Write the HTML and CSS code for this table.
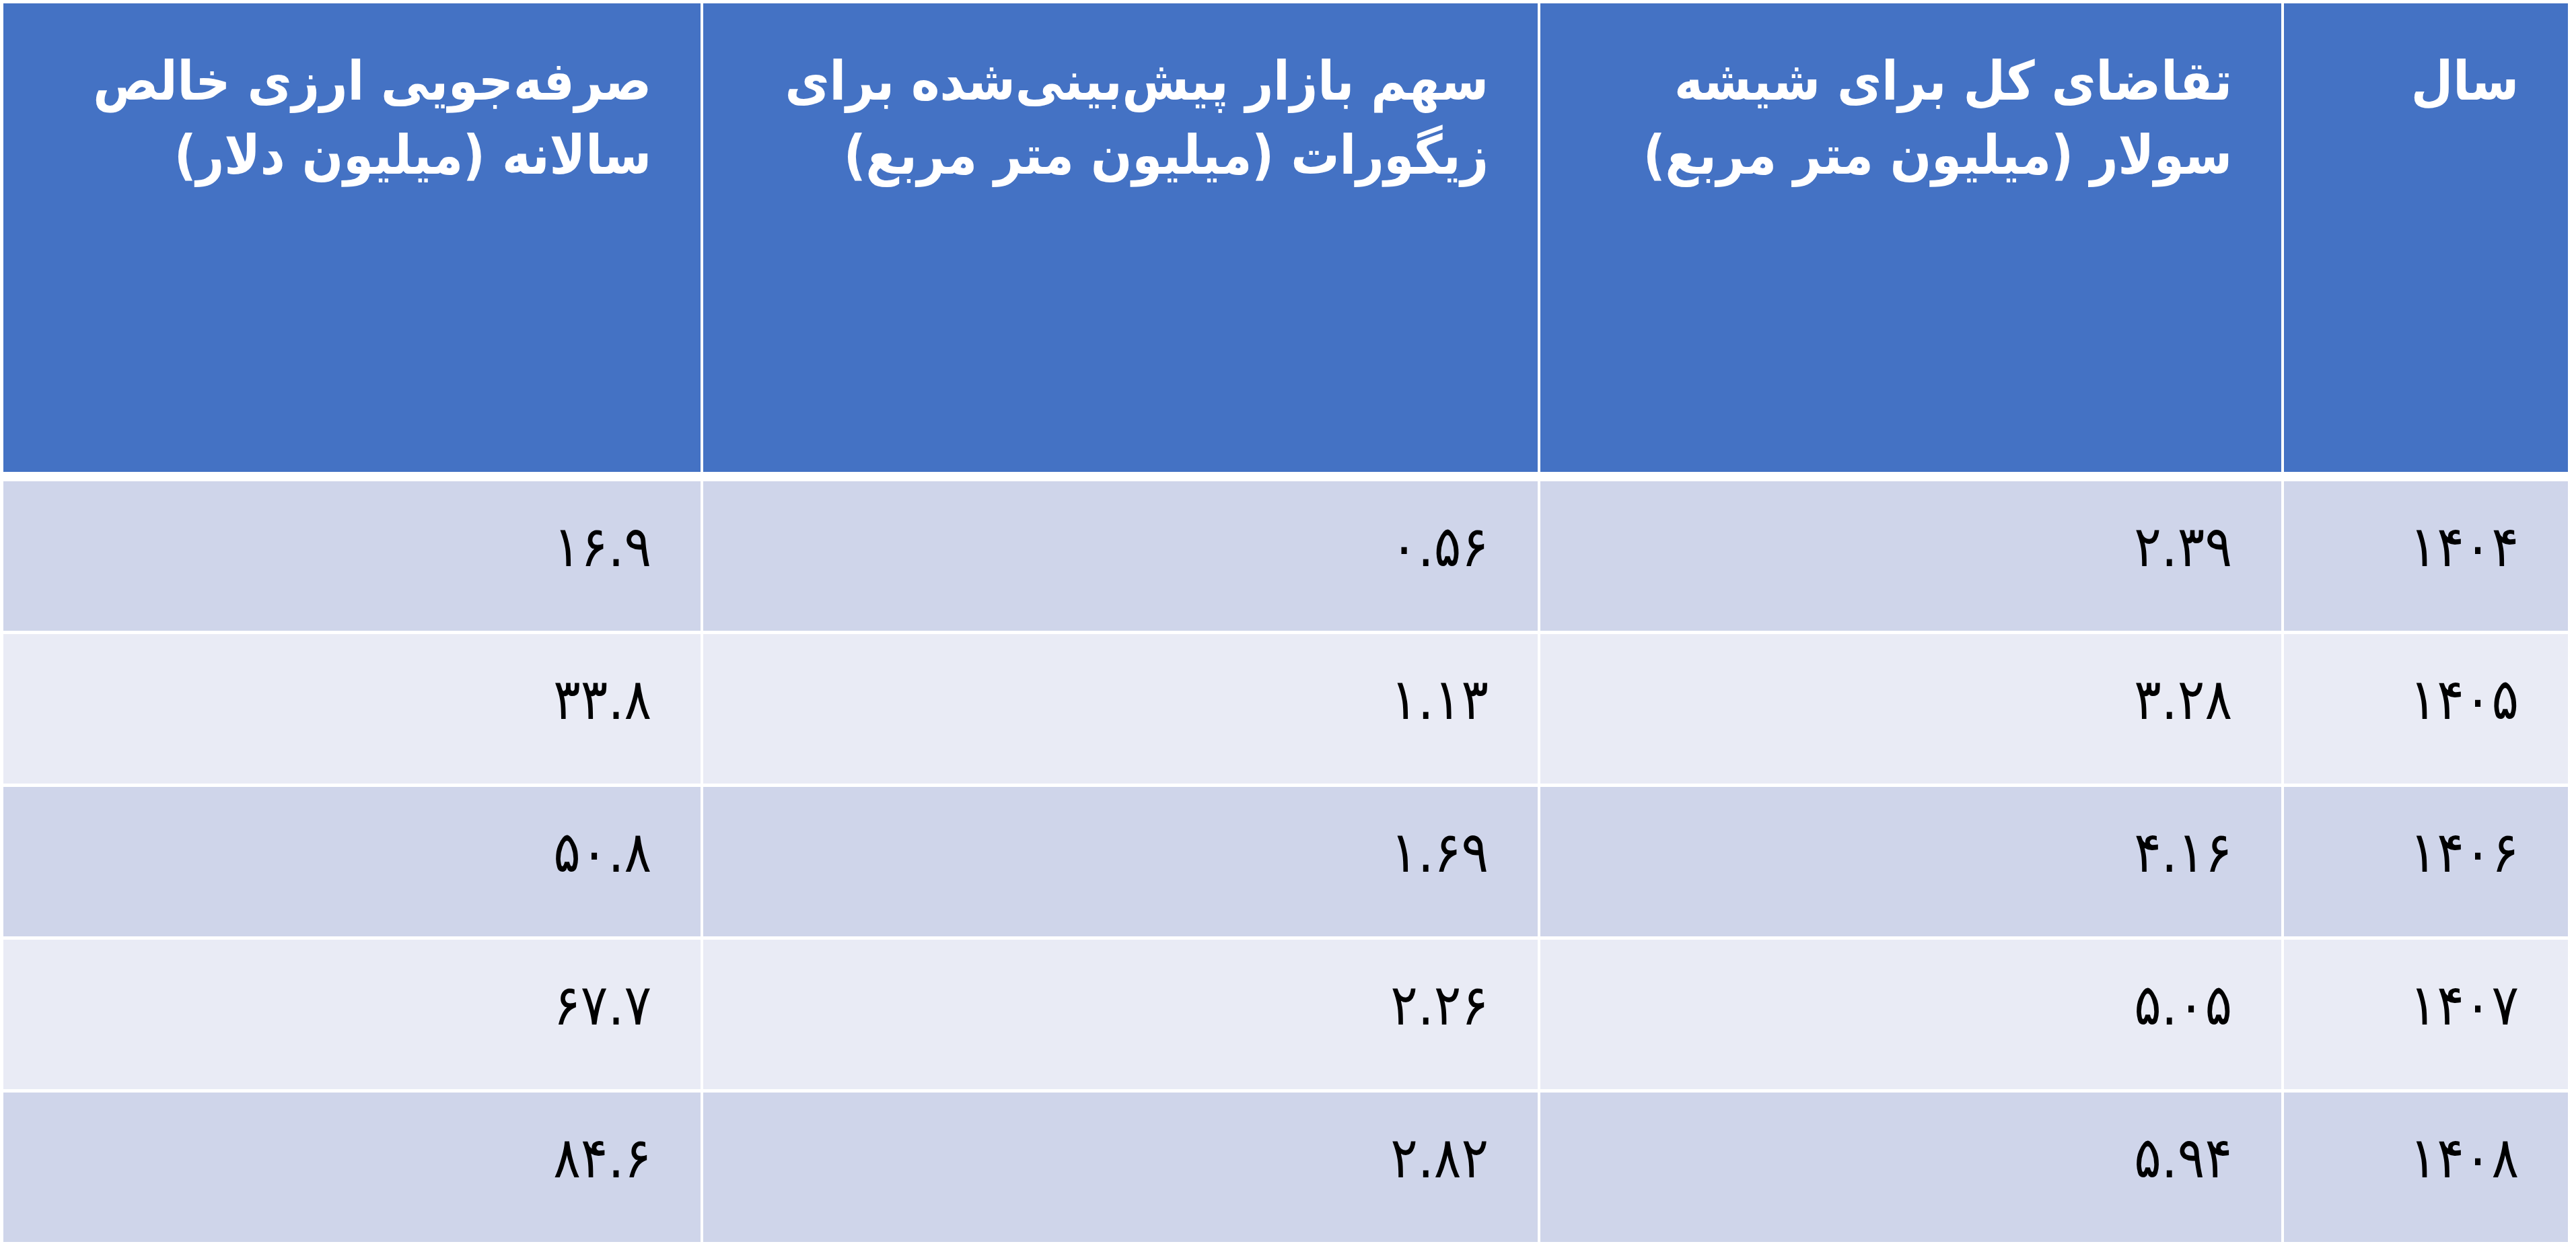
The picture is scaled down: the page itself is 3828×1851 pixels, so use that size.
FILE: index.html
```html
<!DOCTYPE html>
<html lang="fa" dir="rtl">
<head>
<meta charset="utf-8">
<title>جدول</title>
<link rel="stylesheet" href="styles.css">
</head>
<body>
<div class="table">
  <div class="cell head">سال</div>
  <div class="cell head">تقاضای کل برای شیشه<br>سولار (میلیون متر مربع)</div>
  <div class="cell head">سهم بازار پیش‌بینی‌شده برای<br>زیگورات (میلیون متر مربع)</div>
  <div class="cell head">صرفه‌جویی ارزی خالص<br>سالانه (میلیون دلار)</div>

  <div class="cell odd">۱۴۰۴</div>
  <div class="cell odd">۲.۳۹</div>
  <div class="cell odd">۰.۵۶</div>
  <div class="cell odd">۱۶.۹</div>

  <div class="cell even">۱۴۰۵</div>
  <div class="cell even">۳.۲۸</div>
  <div class="cell even">۱.۱۳</div>
  <div class="cell even">۳۳.۸</div>

  <div class="cell odd">۱۴۰۶</div>
  <div class="cell odd">۴.۱۶</div>
  <div class="cell odd">۱.۶۹</div>
  <div class="cell odd">۵۰.۸</div>

  <div class="cell even">۱۴۰۷</div>
  <div class="cell even">۵.۰۵</div>
  <div class="cell even">۲.۲۶</div>
  <div class="cell even">۶۷.۷</div>

  <div class="cell odd">۱۴۰۸</div>
  <div class="cell odd">۵.۹۴</div>
  <div class="cell odd">۲.۸۲</div>
  <div class="cell odd">۸۴.۶</div>
</div>
</body>
</html>
```

FILE: styles.css
```css
html, body {
  margin: 0;
  padding: 0;
  background: #ffffff;
}

body {
  direction: ltr;
  font-family: "DejaVu Sans Condensed", "DejaVu Sans", sans-serif;
  font-stretch: condensed;
}

.table {
  direction: rtl;
  display: grid;
  width: 3811px;
  margin: 5px 0 0 5px;
  grid-template-columns: 422px 1101px 1240px 1036px;
  grid-template-rows: 705px repeat(5, 222px);
  column-gap: 4px;
  row-gap: 5px;
}

.cell {
  box-sizing: border-box;
  padding-right: 73px;
  padding-left: 10px;
  white-space: nowrap;
  text-align: right;
}

.head {
  background: #4472c4;
  color: #ffffff;
  font-weight: bold;
  font-size: 80px;
  line-height: 110px;
  padding-top: 61px;
  margin-bottom: 9px;
}

.odd,
.even {
  color: #000000;
  font-size: 84px;
  line-height: 110px;
  padding-top: 42px;
}

.odd {
  background: #cfd5ea;
}

.even {
  background: #e9ebf5;
}
```
